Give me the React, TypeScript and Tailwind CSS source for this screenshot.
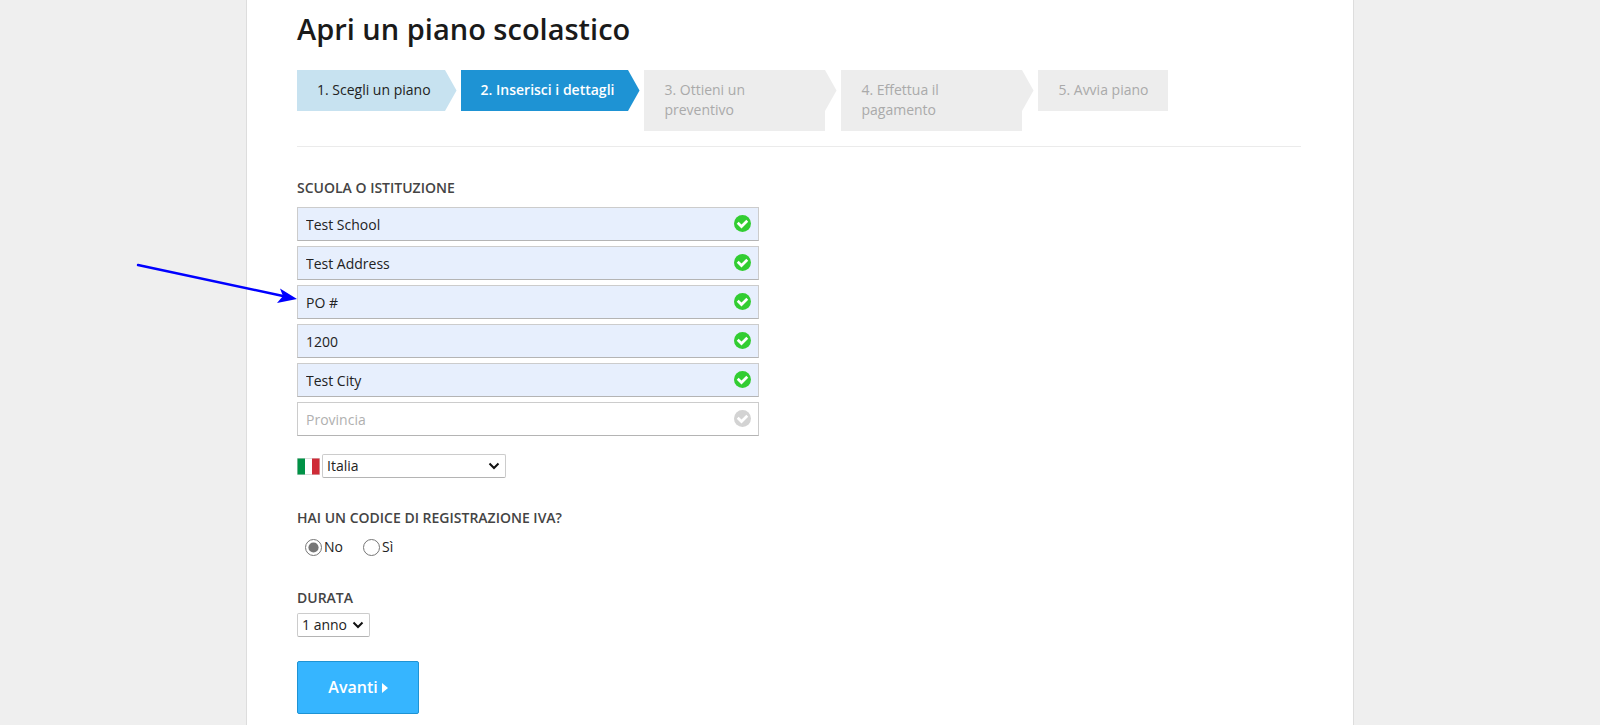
import type {ComponentProps} from "react";
import clsx from "clsx";

interface StepProps {
	label: string;
	state: "done" | "current" | "todo";
	last?: boolean;
}

const steps: StepProps[] = [
	{label: "1. Scegli un piano", state: "done"},
	{label: "2. Inserisci i dettagli", state: "current"},
	{label: "3. Ottieni un preventivo", state: "todo"},
	{label: "4. Effettua il pagamento", state: "todo"},
	{label: "5. Avvia piano", state: "todo", last: true},
];

const fields = [
	{name: "Scuola", value: "Test School"},
	{name: "Indirizzo", value: "Test Address"},
	{name: "Indirizzo 2", value: "PO #"},
	{name: "CAP", value: "1200"},
	{name: "Città", value: "Test City"},
	{name: "Provincia", value: ""},
];

function Step({label, state, last}: StepProps) {
	return (
		<li
			aria-current={state === "current" ? "step" : undefined}
			className={clsx(
				"relative max-w-[181px] pt-[10px] pb-[11px] pl-5",
				last ? "pr-5" : "pr-[14px]",
				state === "done" && "bg-[#c7e2f0] text-[#222222]",
				state === "current" && "bg-[#1e93d4] font-semibold text-white",
				state === "todo" && "bg-[#ededed] text-[#aaaaaa]",
			)}
		>
			{label}
			{!last && (
				<svg
					viewBox="0 0 12 41"
					className={clsx(
						"absolute top-0 left-full h-[41px] w-3",
						state === "done" && "fill-[#c7e2f0]",
						state === "current" && "fill-[#1e93d4]",
						state === "todo" && "fill-[#ededed]",
					)}
				>
					<path d="M0 0 L11.5 20.5 L0 41 Z"/>
				</svg>
			)}
		</li>
	)
}

function Check({className}: {className: string}) {
	return (
		<svg viewBox="0 0 1536 1536" className={className}>
			<circle cx="768" cy="768" r="768" fill="currentColor"/>
			<path d="M335 703 L677 1045 L1200 522" fill="none" stroke="#ffffff" strokeWidth="245"/>
		</svg>
	)
}

function Field({name, value}: {name: string; value: string}) {
	return (
		<div className="relative">
			<input
				type="text"
				aria-label={name}
				placeholder={name}
				defaultValue={value}
				className={clsx(
					"block h-[34px] w-full border border-[#cccccc] border-b-[#b4b4b4] pr-10 pl-2 text-[#222222] placeholder:text-[#b0b0b0]",
					value ? "bg-[#e7effd]" : "bg-white",
				)}
			/>
			<Check className={clsx("absolute top-2 right-2 size-[17px]", value ? "text-[#32cd32]" : "text-[#d3d3d3]")}/>
		</div>
	)
}

function Select({className, ...props}: ComponentProps<"select">) {
	return (
		<span className="relative">
			<select
				{...props}
				className={clsx(
					"block h-6 appearance-none rounded-[2px] border border-[#cccccc] border-b-[#b4b4b4] bg-white pl-1",
					className,
				)}
			/>
			<svg viewBox="0 0 12 8" className="pointer-events-none absolute top-2 right-[6px] h-2 w-3">
				<path d="M1.500 1.500 L6 6 L10.500 1.500" fill="none" stroke="#111111" strokeWidth="2"/>
			</svg>
		</span>
	)
}

function Flag() {
	return (
		<svg viewBox="0 0 23 17" className="h-[17px] w-[23px]">
			<rect width="23" height="17" fill="#dddddd"/>
			<rect x="0.5" y="0.5" width="7.5" height="16" fill="#009246"/>
			<rect x="8" y="1" width="7" height="15" fill="#ffffff"/>
			<rect x="15" y="0.5" width="7.5" height="16" fill="#ce2b37"/>
		</svg>
	)
}

export default function App() {
	return (
		<div className="min-h-screen bg-[#efefef] font-['Open_Sans',sans-serif] text-[14px] leading-5 text-[#222222]">
			<main className="mx-auto min-h-screen max-w-[1108px] border-x border-[#dddddd] bg-white pt-2 pr-[52px] pb-[10px] pl-[50px]">
				<h1 className="text-[29px] leading-[42px] font-semibold text-[#1a1a1a]">Apri un piano scolastico</h1>
				<ol className="mt-5 flex items-start gap-4 border-b border-[#ebebeb] pb-[15px]">
					{steps.map((s) => <Step key={s.label} {...s}/>)}
				</ol>

				<form className="mt-[31px]">
					<fieldset>
						<legend className="font-semibold text-[#444444]">SCUOLA O ISTITUZIONE</legend>
						<div className="relative mt-[9px] flex max-w-[462px] flex-col gap-[5px]">
							{fields.map((f) => <Field key={f.name} {...f}/>)}
							{/* pointer to the PO field */}
							<svg viewBox="0 0 164 48" className="absolute top-[54px] right-full h-12 w-[164px]">
								<path d="M5 4 L150 35" stroke="#0000ff" strokeWidth="2.4" strokeLinecap="round"/>
								<path d="M164 38 L147 27.500 L150 35 L144 42 Z" fill="#0000ff"/>
							</svg>
						</div>
					</fieldset>

					<div className="mt-[18px] flex items-center gap-[2px]">
						<Flag/>
						<Select aria-label="Paese" className="w-[184px]">
							<option>Italia</option>
						</Select>
					</div>

					<fieldset className="mt-[30px]">
						<legend className="font-semibold text-[#444444]">HAI UN CODICE DI REGISTRAZIONE IVA?</legend>
						<div className="mt-[9px] flex gap-5 pl-2">
							<label className="flex items-center gap-[2px]">
								<input type="radio" name="iva" defaultChecked className="size-[17px] accent-[#767676]"/>
								No
							</label>
							<label className="flex items-center gap-[2px]">
								<input type="radio" name="iva" className="size-[17px] accent-[#767676]"/>
								Sì
							</label>
						</div>
					</fieldset>

					<div className="mt-[31px] flex flex-col items-start gap-[5px]">
						<label htmlFor="durata" className="font-semibold text-[#444444]">DURATA</label>
						<Select id="durata" className="w-[73px]">
							<option>1 anno</option>
						</Select>
					</div>

					<button
						type="button"
						className="mt-6 flex h-[53px] w-[122px] items-center justify-center gap-1 rounded-[2px] border border-[#1e93d4] bg-[#36b5ff] pb-[2px] text-[16px] font-semibold text-white"
					>
						Avanti
						<svg viewBox="0 0 6 10" className="mt-[2px] h-[10px] w-[6px] fill-white">
							<path d="M0 0 L6 5 L0 10 Z"/>
						</svg>
					</button>
				</form>
			</main>
		</div>
	)
}
